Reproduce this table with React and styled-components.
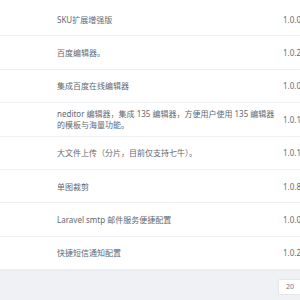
import React from "react";
import styled, { createGlobalStyle } from "styled-components";

const GlobalStyle = createGlobalStyle`
  html, body {
    margin: 0;
    padding: 0;
    background: #ffffff;
    overflow: hidden;
  }
  body {
    font-family: "Noto Sans", "Noto Sans CJK SC", sans-serif;
  }
`;

const extensions = [
  { name: "SKU扩展增强版", version: "1.0.0" },
  { name: "百度编辑器。", version: "1.0.2" },
  { name: "集成百度在线编辑器", version: "1.0.0" },
  {
    name: "neditor 编辑器，集成 135 编辑器，方便用户使用 135 编辑器的模板与海量功能。",
    version: "1.0.1",
  },
  { name: "大文件上传（分片，目前仅支持七牛）。", version: "1.0.1" },
  { name: "单图裁剪", version: "1.0.8" },
  { name: "Laravel smtp 邮件服务便捷配置", version: "1.0.0" },
  { name: "快捷短信通知配置", version: "1.0.2" },
];

const App = () => {
  return (
    <Page>
      <GlobalStyle />
      <Table>
        {extensions.map((ext, index) => (
          <Row key={`ext-${index}`}>
            <Cell />
            <NameCell>{ext.name}</NameCell>
            <VersionCell>{ext.version}</VersionCell>
          </Row>
        ))}
      </Table>
      <Footer>
        <PerPage>20</PerPage>
      </Footer>
    </Page>
  );
};

export default App;

const Page = styled.div`
  width: 300px;
  height: 300px;
  display: flex;
  flex-direction: column;
  overflow: hidden;
  padding-top: 3px;
  box-sizing: border-box;
`;

const Table = styled.div`
  display: flex;
  flex-direction: column;
  border-top: 1px solid #eeeff1;
`;

const Row = styled.div`
  display: grid;
  grid-template-columns: 57px 226px 1fr;
  align-items: center;
  height: 33.375px;
  box-sizing: border-box;
  border-bottom: 1px solid #eeeff1;
  background: #ffffff;
  &:first-child {
    margin-top: -1px;
  }
`;

const Cell = styled.div``;

const NameCell = styled.div`
  font-size: 8px;
  line-height: 11px;
  color: #63686f;
  padding-right: 8px;
`;

const VersionCell = styled.div`
  font-size: 8px;
  color: #676c73;
  white-space: nowrap;
`;

const Footer = styled.div`
  flex: 1;
  background: #eff1f5;
  border-top: 1px solid #e8eaee;
  display: flex;
  justify-content: flex-end;
  align-items: flex-start;
  padding-top: 8px;
`;

const PerPage = styled.div`
  width: 30px;
  height: 16px;
  margin-right: -8px;
  box-sizing: border-box;
  background: #ffffff;
  border: 1px solid #e4e6ea;
  border-radius: 2px;
  font-size: 7px;
  color: #70757c;
  line-height: 14px;
  padding-left: 7px;
`;
